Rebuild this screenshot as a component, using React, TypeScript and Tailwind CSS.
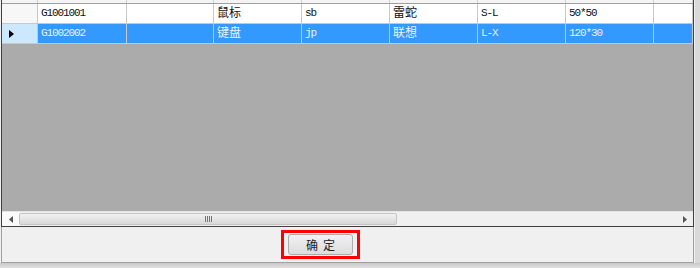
const rows = [
    { cells: ['G1001001', '', '鼠标', 'sb', '雷蛇', 'S-L', '50*50', ''], selected: false },
    { cells: ['G1002002', '', '键盘', 'jp', '联想', 'L-X', '120*30', ''], selected: true },
];

const widths = ['w-[89px]', 'w-[87px]', 'w-[88px]', 'w-[88px]', 'w-[88px]', 'w-[88px]', 'w-[88px]', 'flex-1'];

const font = { fontFamily: '"Liberation Mono", "Noto Sans CJK SC", monospace' };

export default function App() {
    return (
        <div className="w-[700px] h-[268px] bg-[#d9d9d9] flex flex-col overflow-hidden" style={font}>
            <div className="w-[695px] flex flex-col bg-[#f0f0f0]">
                {/* grid */}
                <div className="ml-[1px] w-[693px] h-[227px] flex flex-col border-l border-r border-b border-[#404040]">
                    <div className="h-[4px] flex border-b border-[#a0a0a0] bg-[#f4f4f4]">
                        <div className="w-[36px] border-r border-[#d0d0d0]" />
                        {widths.map((w, i) => (
                            <div key={i} className={`${w} border-r border-[#d0d0d0]`} />
                        ))}
                    </div>
                    {rows.map((r, ri) => (
                        <div key={ri} className="h-[20px] flex border-b border-[#c8c8c8]">
                            <div
                                className={`w-[36px] border-r border-[#c8c8c8] flex items-center pl-[7px] ${
                                    r.selected ? 'bg-[#cce8ff]' : 'bg-[#f7f7f7]'
                                }`}
                            >
                                {r.selected && (
                                    <svg width="5" height="8" viewBox="0 0 5 8">
                                        <path d="M0 0 L5 4 L0 8 Z" fill="#000" />
                                    </svg>
                                )}
                            </div>
                            {r.cells.map((c, ci) => (
                                <div
                                    key={ci}
                                    className={`${widths[ci]} border-r border-[#c8c8c8] flex items-center pl-[3px] whitespace-nowrap ${
                                        r.selected ? 'bg-[#3399ff] text-[#e8f2ff]' : 'bg-white text-[#111]'
                                    } ${/[\u4e00-\u9fff]/.test(c) ? 'text-[12px] tracking-normal' : 'text-[11px] tracking-[-1.1px]'}`}
                                >
                                    {c}
                                </div>
                            ))}
                        </div>
                    ))}
                    <div className="flex-1 bg-[#ababab]" />
                    {/* horizontal scrollbar */}
                    <div className="h-[15px] flex items-stretch bg-[#f0f0f0] border-t border-[#e4e4e4]">
                        <div className="w-[17px] flex items-center justify-center bg-[#fafafa]">
                            <svg width="4" height="7" viewBox="0 0 4 7">
                                <path d="M4 0 L0 3.5 L4 7 Z" fill="#555" />
                            </svg>
                        </div>
                        <div className="w-[378px] my-[1px] rounded-[2px] border border-[#c4c4c4] bg-gradient-to-b from-[#f2f2f2] to-[#d8d8d8] flex items-center justify-center">
                            <div className="flex gap-[1px]">
                                <div className="w-[1px] h-[6px] bg-[#777]" />
                                <div className="w-[1px] h-[6px] bg-[#777]" />
                                <div className="w-[1px] h-[6px] bg-[#777]" />
                                <div className="w-[1px] h-[6px] bg-[#777]" />
                            </div>
                        </div>
                        <div className="flex-1" />
                        <div className="w-[17px] flex items-center justify-center">
                            <svg width="4" height="7" viewBox="0 0 4 7">
                                <path d="M0 0 L4 3.5 L0 7 Z" fill="#555" />
                            </svg>
                        </div>
                    </div>
                </div>
                {/* bottom panel */}
                <div className="ml-[1px] w-[693px] h-[36px] border-l border-r border-b border-[#a0a0a0] bg-[#f0f0f0] pt-[3px]">
                    <div className="ml-[279px] w-[79px] h-[29px] border-[3px] border-[#ff0000] flex items-center justify-center">
                        <button
                            className="w-[65px] h-[21px] rounded-[3px] border border-[#acacac] bg-gradient-to-b from-[#f2f2f2] to-[#dcdcdc] text-[12px] text-[#222] tracking-[5px] pl-[5px] leading-none"
                            style={{ fontFamily: '"Noto Sans CJK SC", sans-serif' }}
                        >
                            确定
                        </button>
                    </div>
                </div>
            </div>
            <div className="flex-1 bg-gradient-to-b from-[#c8c8c8] to-[#e0e0e0]" />
        </div>
    );
}
